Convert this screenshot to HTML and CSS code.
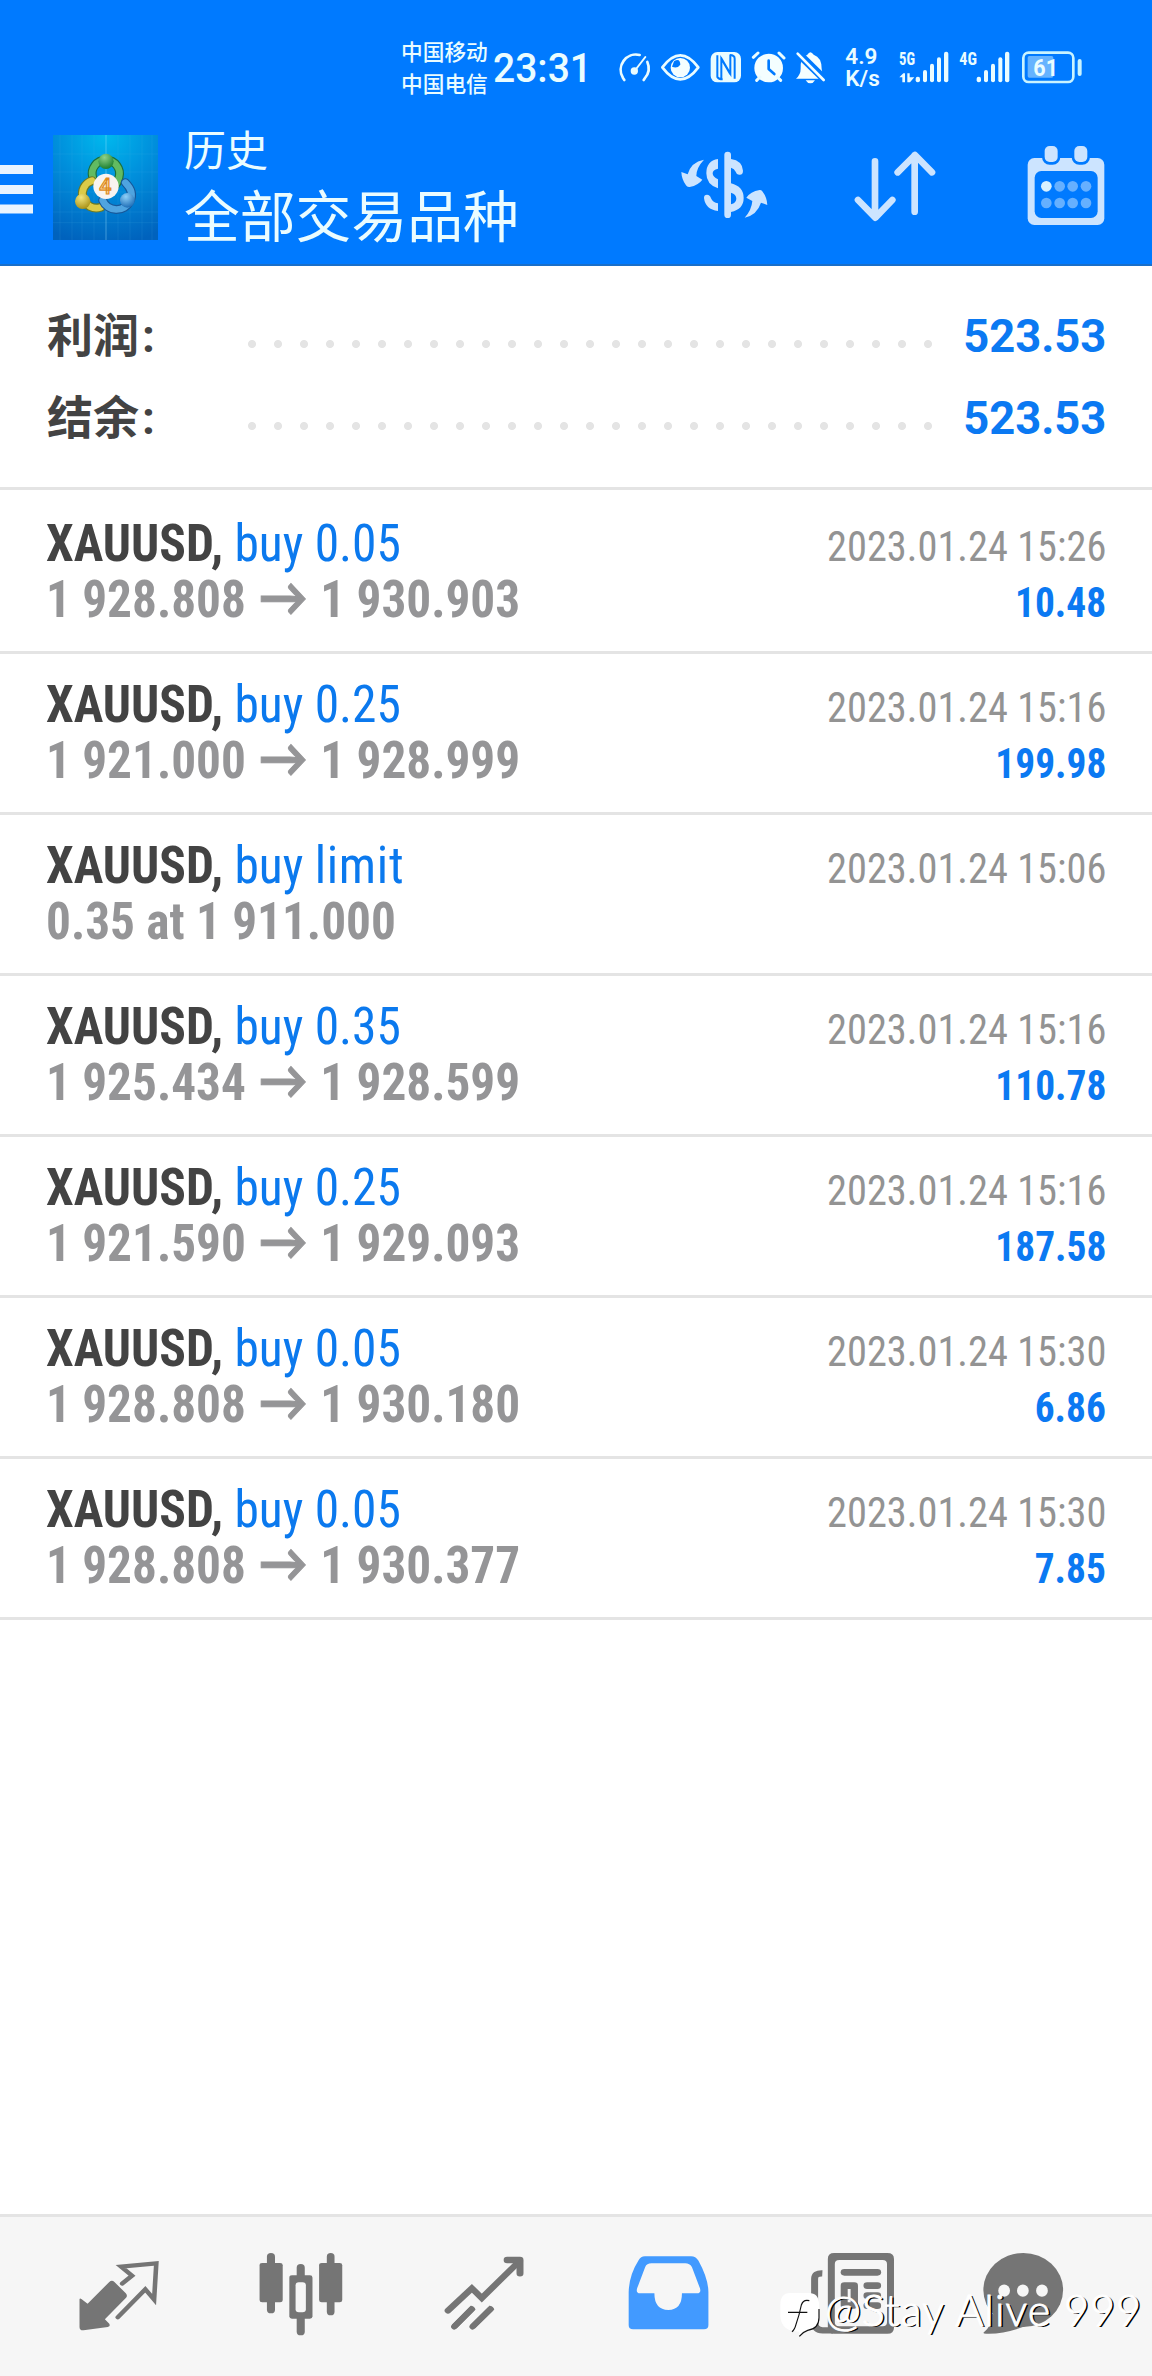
FILE: index.html
```html
<!DOCTYPE html>
<html lang="zh-CN">
<head>
<meta charset="utf-8">
<title>历史</title>
<link rel="stylesheet" href="styles.css">
</head>
<body>
<div class="screen">
  <header class="top">
    <div class="status">
      <div class="carriers"><span>中国移动</span><span>中国电信</span></div>
      <div class="clock">23:31</div>
      <div class="status-icons">
        <svg width="43.33" height="90" viewBox="700 0 130 270" fill="none" stroke="#eafcff" stroke-width="8" stroke-linecap="round"><path d="M734 180L730 174A46 46 0 0 1 780 105M803 126A46 46 0 0 1 796 174L792 180"/><path d="M797 111L767 150" stroke-width="6"/><circle cx="764" cy="153" r="7" fill="#eafcff"/></svg>
        <svg width="50" height="90" viewBox="830 0 150 270"><path d="M849 142Q903 70 957 142Q903 214 849 142Z" fill="none" stroke="#eafcff" stroke-width="8" stroke-linejoin="round"/><circle cx="903" cy="143" r="29" fill="#f4feff"/><path d="M884 124Q902 112 903 134Q894 147 878 140Z" fill="#007aff"/></svg>
        <svg width="40" height="90" viewBox="980 0 120 270"><rect x="994" y="96" width="91" height="91" rx="20" fill="#eafcff"/><path d="M1014 106V171Q1018 178 1030 178M1026 178V116L1053 163M1051 105Q1066 105 1066 116V176M1053 105V161L1025 113" fill="none" stroke="#007aff" stroke-width="6"/></svg>
        <svg width="45" height="90" viewBox="-40 0 135 270"><circle cx="28" cy="144" r="43" fill="#f4feff"/><path d="M-18 112L-4 99M59 99L74 114M-8 181L2 171M54 171L64 181" stroke="#eafcff" stroke-width="9" stroke-linecap="round"/><path d="M28 122V147L45 162" fill="none" stroke="#007aff" stroke-width="8" stroke-linecap="round" stroke-linejoin="round"/></svg>
        <svg width="40" height="90" viewBox="95 0 120 270"><path d="M110 176Q124 164 124 146Q122 112 144 104Q153 89 163 104Q187 112 187 146Q187 162 196 176ZM139 181H167Q162 190 153 190Q144 190 139 181Z" fill="#f4feff"/><path d="M108 92L204 186" stroke="#007aff" stroke-width="24"/><path d="M115 101L193 180" stroke="#f4feff" stroke-width="8" stroke-linecap="round"/></svg>
      </div>
      <div class="speed"><span>4.9</span><span>K/s</span></div>
      <svg class="signal" width="50" height="90" viewBox="420 0 150 270" fill="#eafcff"><text x="420" y="136" class="net" textLength="48" lengthAdjust="spacingAndGlyphs">5G</text><path d="M421 172L433 160H438V187H430V172ZM445 160H452V172H466L453 187H445Z"/><rect x="470" y="170" width="13" height="17" rx="6"/><rect x="492" y="150" width="12" height="37" rx="6"/><rect x="513" y="131" width="12" height="56" rx="6"/><rect x="534" y="112" width="12" height="75" rx="6"/><rect x="555" y="95" width="13" height="92" rx="6"/></svg>
      <svg class="signal second" width="51" height="90" viewBox="600 0 153 270" fill="#eafcff"><text x="601" y="136" class="net" textLength="53" lengthAdjust="spacingAndGlyphs">4G</text><rect x="653" y="170" width="13" height="17" rx="6"/><rect x="675" y="150" width="12" height="37" rx="6"/><rect x="696" y="131" width="12" height="56" rx="6"/><rect x="718" y="112" width="12" height="75" rx="6"/><rect x="738" y="95" width="13" height="92" rx="6"/></svg>
      <svg class="battery" width="62" height="90" viewBox="785 0 186 270"><rect x="792" y="98" width="150" height="88" rx="16" fill="none" stroke="#c9f3ff" stroke-width="8"/><rect x="805" y="108" width="77" height="65" rx="5" fill="#66b3ff"/><rect x="955" y="117" width="12" height="51" rx="6" fill="#c9f3ff"/><text x="822" y="168" class="charge" textLength="74" lengthAdjust="spacingAndGlyphs">61</text></svg>
    </div>
    <div class="appbar">
      <svg class="menu" width="33" height="50" viewBox="0 0 33 50" fill="#e9f4ff"><path d="M0 0H33V9H0ZM0 20H33V29H0ZM0 39.500H33V48.500H0Z"/></svg>
      <svg class="logo" width="105" height="105" viewBox="9 9 315 315">
        <defs>
          <radialGradient id="sky" cx=".5" cy="0" r="1.05"><stop offset="0" stop-color="#00b9ee"/><stop offset=".45" stop-color="#008fdc"/><stop offset="1" stop-color="#0062bd"/></radialGradient>
          <radialGradient id="gs" cx=".4" cy=".25" r=".8"><stop offset="0" stop-color="#8fd28a"/><stop offset="1" stop-color="#157a2b"/></radialGradient>
          <radialGradient id="ys" cx=".4" cy=".25" r=".8"><stop offset="0" stop-color="#f3e67c"/><stop offset="1" stop-color="#a58d12"/></radialGradient>
          <radialGradient id="bs" cx=".4" cy=".25" r=".8"><stop offset="0" stop-color="#8fd0f8"/><stop offset="1" stop-color="#1869b4"/></radialGradient>
        </defs>
        <rect x="9" y="9" width="315" height="315" fill="url(#sky)"/>
        <path d="M30 9V324M66 9V324M96 9V324M132 9V324M204 9V324M240 9V324M276 9V324M306 9V324M9 66H324M9 120H324M9 180H324M9 240H324M9 272H324" stroke="#5cc6f0" stroke-opacity=".18" stroke-width="2"/>
        <path d="M168 9V324" stroke="#a5e4ff" stroke-opacity=".6" stroke-width="2"/>
        <g fill="none" stroke-linecap="round">
          <path d="M128 136A41 41 0 1 1 207 136Q203 152 192 165" stroke="#1c6f3c" stroke-width="27"/>
          <path d="M128 136A41 41 0 1 1 207 136Q203 152 192 165" stroke="#62bb62" stroke-width="20"/>
          <path d="M152 226A38 38 0 1 1 126 146" stroke="#6b7a25" stroke-width="27"/>
          <path d="M152 226A38 38 0 1 1 126 146" stroke="#dccb48" stroke-width="20"/>
          <path d="M226 152Q254 180 240 207A45 45 0 0 1 158 205" stroke="#17589a" stroke-width="27"/>
          <path d="M226 152Q254 180 240 207A45 45 0 0 1 158 205" stroke="#4fa4e0" stroke-width="20"/>
        </g>
        <circle cx="168" cy="88" r="23" fill="url(#gs)"/>
        <circle cx="98" cy="208" r="23" fill="url(#ys)"/>
        <circle cx="232" cy="205" r="22" fill="url(#bs)"/>
        <circle cx="168" cy="163" r="38" fill="#f8f3f0"/>
        <text x="166" y="187" class="logo-four" text-anchor="middle">4</text>
      </svg>
      <div class="titles"><span class="small">历史</span><span class="large">全部交易品种</span></div>
      <div class="actions">
        <svg width="96.67" height="90" viewBox="110 60 290 270" fill="#cce4ff"><rect x="252" y="95" width="20" height="199" rx="10"/><path d="M272 117Q306 122 308 152Q308 166 296 164Q288 163 286 155Q282 146 272 143Z"/><path fill-rule="evenodd" d="M272 190Q310 200 310 234Q310 268 272 276ZM272 218Q288 223 288 236Q288 248 272 253Z"/><path d="M233 117V146Q217 149 217 160Q217 171 233 178V205Q198 194 198 160Q198 122 233 117Z"/><path d="M200 224Q209 224 212 235Q218 248 233 250V273Q195 268 191 234Q191 224 200 224Z"/><path d="M191 119Q168 143 168 168L186 179Q175 195 148 201Q140 202 137 196Q124 178 123 156L142 163Q152 126 191 119Z"/><path d="M313 293Q334 270 336 243L318 233Q330 215 358 210Q364 209 367 215Q380 232 381 255L362 248Q350 285 313 293Z"/></svg>
        <svg width="90" height="90" viewBox="630 60 270 270" fill="none" stroke="#cce4ff" stroke-width="20" stroke-linecap="round" stroke-linejoin="round"><path d="M705 124V290M654 240L706 293L757 240M824 275V106M773 157L825 105L876 157"/></svg>
        <svg width="86.67" height="90" viewBox="1150 60 260 270"><rect x="1164" y="114" width="230" height="201" rx="20" fill="#cce4ff"/><rect x="1185" y="153" width="189" height="141" rx="20" fill="#007aff"/><g fill="#cce4ff" stroke="#007aff" stroke-width="16" paint-order="stroke"><rect x="1215" y="78" width="39" height="48" rx="15"/><rect x="1304" y="78" width="39" height="48" rx="15"/></g><g fill="#66b0ff"><circle cx="1220" cy="199" r="16" fill="#d6f0ff"/><circle cx="1260" cy="199" r="16"/><circle cx="1299" cy="199" r="16"/><circle cx="1339" cy="199" r="16"/><circle cx="1220" cy="249" r="16"/><circle cx="1260" cy="249" r="16"/><circle cx="1299" cy="249" r="16"/><circle cx="1339" cy="249" r="16"/></g></svg>
      </div>
    </div>
  </header>

  <section class="summary">
    <div class="sum-row"><span class="label"><span class="name">利润</span>:</span><i class="dots"></i><span class="amount">523.53</span></div>
    <div class="sum-row"><span class="label"><span class="name">结余</span>:</span><i class="dots"></i><span class="amount">523.53</span></div>
  </section>

  <main class="deals">
    <article class="deal">
      <div class="line"><span class="title"><b>XAUUSD,</b> buy 0.05</span><span class="date">2023.01.24 15:26</span></div>
      <div class="line"><span class="price">1 928.808 <span class="arrow">→</span> 1 930.903</span><span class="profit">10.48</span></div>
    </article>
    <article class="deal">
      <div class="line"><span class="title"><b>XAUUSD,</b> buy 0.25</span><span class="date">2023.01.24 15:16</span></div>
      <div class="line"><span class="price">1 921.000 <span class="arrow">→</span> 1 928.999</span><span class="profit">199.98</span></div>
    </article>
    <article class="deal">
      <div class="line"><span class="title"><b>XAUUSD,</b> buy <span class="kind">limit</span></span><span class="date">2023.01.24 15:06</span></div>
      <div class="line"><span class="price">0.35 at 1 911.000</span></div>
    </article>
    <article class="deal">
      <div class="line"><span class="title"><b>XAUUSD,</b> buy 0.35</span><span class="date">2023.01.24 15:16</span></div>
      <div class="line"><span class="price">1 925.434 <span class="arrow">→</span> 1 928.599</span><span class="profit">110.78</span></div>
    </article>
    <article class="deal">
      <div class="line"><span class="title"><b>XAUUSD,</b> buy 0.25</span><span class="date">2023.01.24 15:16</span></div>
      <div class="line"><span class="price">1 921.590 <span class="arrow">→</span> 1 929.093</span><span class="profit">187.58</span></div>
    </article>
    <article class="deal">
      <div class="line"><span class="title"><b>XAUUSD,</b> buy 0.05</span><span class="date">2023.01.24 15:30</span></div>
      <div class="line"><span class="price">1 928.808 <span class="arrow">→</span> 1 930.180</span><span class="profit">6.86</span></div>
    </article>
    <article class="deal">
      <div class="line"><span class="title"><b>XAUUSD,</b> buy 0.05</span><span class="date">2023.01.24 15:30</span></div>
      <div class="line"><span class="price">1 928.808 <span class="arrow">→</span> 1 930.377</span><span class="profit">7.85</span></div>
    </article>
  </main>

  <nav class="tabs">
    <svg viewBox="200 140 240 280" preserveAspectRatio="none"><path d="M215 297Q216 292 221 297L237 310L296 245Q303 238 310 245L341 279Q347 286 341 293L284 357L296 370Q300 379 292 380L226 390Q215 391 215 380Z" fill="#757575"/><path d="M331 250L358 226L328 199L424 189L418 298L394 267L319 351" fill="none" stroke="#757575" stroke-width="12.500" stroke-linecap="round" stroke-linejoin="miter"/></svg>
    <svg viewBox="700 140 240 280" preserveAspectRatio="none" fill="#757575"><rect x="727" y="158" width="22" height="181" rx="11"/><rect x="707" y="188" width="63" height="118" rx="7"/><rect x="890" y="158" width="21" height="187" rx="11"/><rect x="869" y="188" width="63" height="118" rx="7"/><rect x="808" y="191" width="22" height="214" rx="11"/><rect x="788" y="225" width="63" height="130" rx="7"/><rect x="805" y="246" width="28" height="90" rx="9" fill="#f6f6f6"/></svg>
    <svg viewBox="1200 140 240 280" preserveAspectRatio="none" fill="none" stroke="#757575" stroke-linecap="round" stroke-linejoin="round"><path d="M1219 331L1284 264L1311 293L1414 182" stroke-width="18" stroke-linejoin="miter"/><path d="M1380 179H1415V219" stroke-width="19"/><path d="M1236 379L1288 321M1286 379L1339 321" stroke-width="17" stroke-linecap="butt"/><path d="M1236 379L1284 326M1286 379L1335 326" stroke-width="17"/></svg>
    <svg viewBox="132 140 240 280" preserveAspectRatio="none" fill="#429aff"><path fill-rule="evenodd" d="M186 168H312Q324 168 332 181Q359 235 359 276V374Q359 387 347 387H154Q142 387 142 374V276Q143 225 169 180Q175 168 186 168ZM204 189Q191 189 187 200L165 264Q161 279 173 279H212Q212 329 250 329Q287 329 287 279H328Q340 279 336 264L314 200Q308 189 296 189Z"/></svg>
    <svg viewBox="632 140 240 280" preserveAspectRatio="none" fill="#757575"><path d="M671 219Q650 218 650 236V366Q650 390 672 390H700" fill="none" stroke="#757575" stroke-width="19"/><path fill-rule="evenodd" d="M703 158H848Q866 158 866 176V382Q866 400 848 400H703Q686 400 686 382V176Q686 158 703 158ZM717 179Q705 179 705 191V366Q705 378 717 378H835Q847 378 847 366V191Q847 179 835 179Z"/><rect x="721" y="206" width="110" height="20" rx="10"/><path fill-rule="evenodd" d="M731 246H758Q768 246 768 256V315Q768 325 758 325H731Q721 325 721 315V256Q721 246 731 246ZM740 266V306H748V266Z"/><rect x="783" y="246" width="48" height="20" rx="10"/><rect x="783" y="276" width="48" height="20" rx="10"/><rect x="783" y="306" width="48" height="20" rx="10"/></svg>
    <svg viewBox="1132 140 240 280" preserveAspectRatio="none" fill="#757575"><ellipse cx="1217" cy="269" rx="108.500" ry="111"/><path d="M1110 396Q1134 374 1132 340L1230 374Q1170 402 1116 400Q1106 400 1110 396Z"/><g fill="#f6f6f6"><ellipse cx="1165" cy="271" rx="16" ry="18.500"/><ellipse cx="1216" cy="271" rx="16" ry="18.500"/><ellipse cx="1268" cy="271" rx="16" ry="18.500"/></g></svg>
  </nav>

  <div class="watermark">
    <svg width="50" height="50" viewBox="0 0 150 150" fill="#fff"><path d="M60 18H116Q147 18 147 52V92Q147 124 113 130Q100 134 88 148V134Q34 134 31 88V54Q31 18 60 18Z"/><path d="M118 41Q100 36 94 54Q88 84 78 112Q74 128 66 134M54 76H112M147 66V92Q147 124 113 130Q100 134 88 148" fill="none" stroke="#111" stroke-width="3.500"/></svg>
    <span>@Stay Alive 999</span>
  </div>
</div>
</body>
</html>
```
FILE: styles.css
```css
* { box-sizing: border-box; }

body {
  margin: 0;
  background: #fff;
  font-family: Roboto, "Noto Sans CJK SC", sans-serif;
}

svg { display: block; flex: none; overflow: visible; }

.screen {
  position: relative;
  display: flex;
  flex-direction: column;
  width: 1152px;
  height: 2376px;
  overflow: hidden;
}

/* Header */
.top {
  height: 266px;
  flex: none;
  background: #007aff;
  border-bottom: 2px solid #1a6fc9;
  color: #eafcff;
}

.status {
  display: flex;
  height: 110px;
  padding: 20px 0 0 401px;
}

.carriers {
  display: flex;
  flex-direction: column;
  width: 92px;
  padding-top: 15px;
  font: 500 21.7px/32px "Noto Sans CJK SC", sans-serif;
  white-space: nowrap;
}

.clock {
  width: 120px;
  padding-top: 27px;
  font-size: 41.5px;
  font-weight: 500;
  line-height: 42px;
  transform: scaleX(.94);
  transform-origin: left;
}

.status-icons { display: flex; }

.speed {
  display: flex;
  flex-direction: column;
  width: 55px;
  padding: 25px 0 0 14px;
  font-size: 22.5px;
  font-weight: 600;
  line-height: 22px;
}

.signal { margin-left: 13px; }
.signal.second { margin-left: 10px; }
.battery { margin-left: 11px; }

.net { font: 700 54px "Roboto Condensed", sans-serif; }
.charge { font: 700 74px Roboto, sans-serif; fill: #eafcff; }

.appbar { display: flex; align-items: flex-start; padding-right: 42px; }
.menu { margin-top: 55px; }
.logo { margin: 25px 0 0 20px; }
.logo-four { font: 500 64px Roboto, sans-serif; fill: #fbd9a0; stroke: #dd8a1c; stroke-width: 3.5px; }

.titles {
  display: flex;
  flex-direction: column;
  gap: 16px;
  padding: 17px 0 0 26px;
  font-family: "Noto Sans CJK SC", sans-serif;
  white-space: nowrap;
}

.small { font-size: 42px; line-height: 42px; }
.large { font-size: 55.8px; line-height: 56px; }

.actions { display: flex; gap: 80px; margin: 30px 0 0 auto; }
.actions svg:nth-child(2) { margin: 0 3.300px 0 -3.300px; }

/* Totals */
.summary {
  flex: none;
  height: 224px;
  padding: 29px 46px 0 47px;
  border-bottom: 3px solid #e4e4e4;
}

.sum-row {
  display: flex;
  align-items: baseline;
  font-size: 46px;
  font-weight: 700;
  line-height: 82px;
  height: 82px;
}

.label { width: 192px; color: #434343; }
.name { margin-right: 3px; }

.dots {
  align-self: center;
  width: 702px;
  height: 26px;
  margin-top: 16px;
  background: radial-gradient(circle, #e4e4e4 3.600px, transparent 4.400px) 0 0 / 26px 26px repeat-x;
}

.amount {
  margin-left: auto;
  color: #0b79f2;
  transform: scaleX(.985);
  transform-origin: right;
}

/* Deals */
.deals {
  flex: 1;
  padding-top: 3px;
  font-family: "Roboto Condensed", Roboto, sans-serif;
}

.deal {
  height: 161px;
  padding: 23px 46px 0;
  border-bottom: 3px solid #e4e4e4;
}

.line {
  display: flex;
  align-items: baseline;
  justify-content: space-between;
  height: 56px;
  line-height: 55px;
  white-space: nowrap;
}

.title,
.price {
  font-size: 52.5px;
  transform: scaleX(.938);
  transform-origin: left;
}

.title { color: #0b79ee; transform: scaleX(.942); }
.title b { color: #434343; }
.kind { letter-spacing: .8px; }
.price { font-weight: 700; color: #959597; }

.arrow {
  position: relative;
  top: -1px;
  margin: 0 1.3px;
  font-family: Lato, sans-serif;
  line-height: 0;
  -webkit-text-stroke: 1px #959597;
}

.date,
.profit {
  font-size: 42px;
  transform: scaleX(.962);
  transform-origin: right;
}

.date { color: #939393; }
.profit { font-weight: 700; color: #0b79f2; transform: scaleX(.938); }

/* Bottom tabs */
.tabs {
  display: flex;
  flex: none;
  gap: 95.5px;
  height: 162px;
  padding: 29.7px 0 0 73.5px;
  background: #f6f6f6;
  border-top: 3px solid #e4e4e4;
}

.tabs svg { width: 88.2px; height: 93.3px; }

.watermark {
  position: absolute;
  left: 770px;
  top: 2287px;
  display: flex;
}

.watermark span {
  margin: -2px 0 0 5px;
  font: 300 43px/50px Lato, sans-serif;
  letter-spacing: 1.1px;
  color: #fff;
  -webkit-text-stroke: 1px #fff;
  text-shadow: 2px 1px 0 #000;
  white-space: nowrap;
}
```
